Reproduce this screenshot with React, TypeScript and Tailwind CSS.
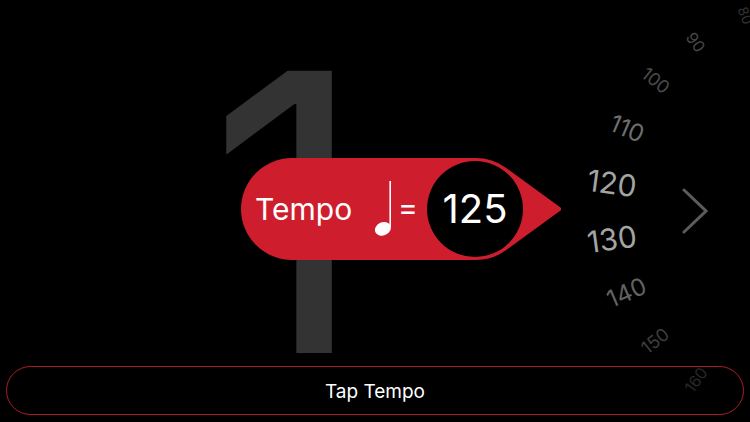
import React, { useState } from 'react';

const DIAL_RADIUS = 209;
const DEGREES_PER_BPM = 1.54;

const DIAL_MARKS = [
  { bpm: 80, className: 'text-sm text-[#343434]' },
  { bpm: 90, className: 'text-base text-[#484848]' },
  { bpm: 100, className: 'text-lg text-[#4c4c4c]' },
  { bpm: 110, className: 'text-2xl text-[#6e6e6e]' },
  { bpm: 120, className: 'text-3xl text-[#a4a4a4]' },
  { bpm: 130, className: 'text-3xl text-[#a4a4a4]' },
  { bpm: 140, className: 'text-2xl text-[#626262]' },
  { bpm: 150, className: 'text-lg text-[#3e3e3e]' },
  { bpm: 160, className: 'text-base text-[#282828]' },
];

const QuarterNote: React.FC = () => (
  <svg viewBox="0 0 18 56" className="w-[18px] h-14" aria-hidden="true">
    <ellipse cx="7.9" cy="47.8" rx="8.2" ry="6.6" transform="rotate(-24 7.9 47.8)" fill="white" />
    <path d="M15.2 0V46" stroke="white" strokeWidth="1.6" />
  </svg>
);

const TempoBadge: React.FC<{ tempo: number }> = ({ tempo }) => (
  <div className="relative w-80 h-[102px] flex items-center">
    <svg viewBox="0 0 320 102" className="absolute inset-0 size-full" aria-hidden="true">
      <path d="M51 0H235A51 51 0 0 1 264.5 9.5L319.5 49.5Q321 51 319.5 52.5L264.5 92.5A51 51 0 0 1 235 102H51A51 51 0 0 1 51 0Z" fill="#ce1e2d" />
    </svg>
    <div className="relative w-full flex items-center pl-[14px] text-white">
      <span className="w-[120px] text-[30px] leading-10">Tempo</span>
      <QuarterNote />
      <span className="w-[34px] pb-1 pr-1 text-center text-[30px] leading-8">=</span>
      <span className="size-24 rounded-full bg-black flex items-center justify-center text-[40px] leading-none">
        {tempo}
      </span>
    </div>
  </div>
);

const Dial: React.FC<{ tempo: number }> = ({ tempo }) => (
  <div className="relative size-0">
    {DIAL_MARKS.map(({ bpm, className }) => {
      const angle = (tempo - bpm) * DEGREES_PER_BPM;
      return (
        <span
          key={bpm}
          className={`absolute leading-none ${className}`}
          style={{ transform: `translate(-50%, -50%) rotate(${angle}deg) translateX(-${DIAL_RADIUS}px)` }}
        >
          {bpm}
        </span>
      );
    })}
  </div>
);

const App: React.FC = () => {
  const [tempo, setTempo] = useState<number>(125);
  const [lastTap, setLastTap] = useState<number | null>(null);

  const handleTap = () => {
    const now = Date.now();
    if (lastTap && now - lastTap < 2000) {
      setTempo(Math.min(165, Math.max(75, Math.round(60000 / (now - lastTap)))));
    }
    setLastTap(now);
  };

  return (
    <main className="min-h-screen grid grid-cols-1 overflow-hidden bg-black font-['Inter',sans-serif]">
      <div className="col-start-1 row-start-1 flex items-center justify-center pr-[176px] pt-0.5">
        <span className="text-[388px] leading-none text-[#333333]">1</span>
      </div>

      <div className="col-start-1 row-start-1 flex items-center justify-center pl-[52px] pb-1">
        <TempoBadge tempo={tempo} />
      </div>

      <div className="col-start-1 row-start-1 flex items-center justify-end -mr-[69px]">
        <Dial tempo={tempo} />
      </div>

      <div className="col-start-1 row-start-1 flex items-center justify-end pr-[42px]">
        <button aria-label="Next beat" className="cursor-pointer">
          <svg viewBox="0 0 26 46" className="w-[26px] h-[46px]" fill="none" stroke="#5c5c5c" strokeWidth="3" strokeLinecap="round">
            <path d="M2 2L24 23L2 44" />
          </svg>
        </button>
      </div>

      <div className="relative col-start-1 row-start-1 self-end px-1.5 pb-[7px]">
        <button
          onClick={handleTap}
          className="w-full h-[49px] pt-1 rounded-full border border-[#b01c2a] text-[19px] text-white cursor-pointer"
        >
          Tap Tempo
        </button>
      </div>
    </main>
  );
};

export default App;
